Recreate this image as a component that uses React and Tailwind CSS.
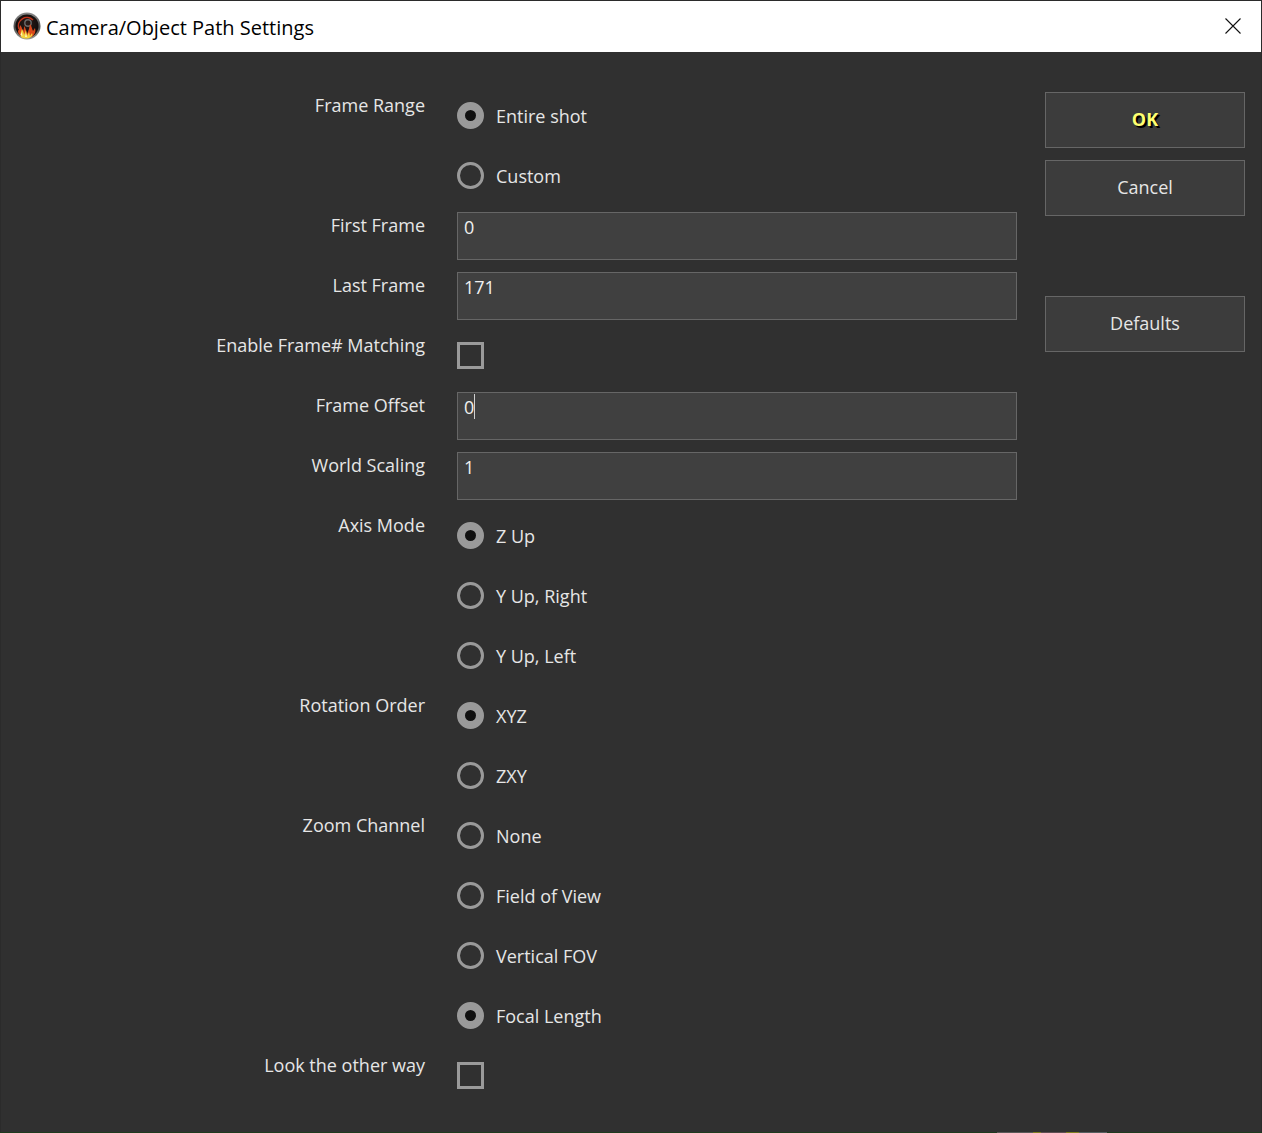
import React from 'react';

const Radio = ({ checked, label }) => (
  <div className="flex items-start h-[60px]">
    <div className={`w-[27px] h-[27px] mt-[16px] rounded-full border-[3px] border-[#9a9a9a] flex items-center justify-center shrink-0 ${checked ? 'bg-[#9a9a9a]' : ''}`}>
      {checked && <div className="w-[11px] h-[11px] rounded-full bg-[#111111]"></div>}
    </div>
    <span className="ml-3 mt-[17px] leading-[27px] text-[#e6e6e6]">{label}</span>
  </div>
);

const Check = () => (
  <div className="h-[60px] pt-[16px]">
    <div className="w-[27px] h-[27px] border-[3px] border-[#9a9a9a]"></div>
  </div>
);

const Field = ({ value, caret }) => (
  <div className="h-[60px] pt-[6px]">
    <div className="h-[48px] border border-[#666666] bg-[#404040] pl-[6px] pt-[1px] flex items-start text-[#f0f0f0]">
      <span className="leading-[27px]">{value}</span>
      {caret && <span className="w-px h-[25px] bg-[#d0d0d0]"></span>}
    </div>
  </div>
);

const Row = ({ label, children }) => (
  <div className="flex">
    <div className="w-[424px] text-right pt-[6px] leading-[27px] text-[#e6e6e6] h-[60px]">{label}</div>
    <div className="ml-[32px] flex-1">{children}</div>
  </div>
);

const Btn = ({ children, className }) => (
  <div className={`h-[56px] border border-[#666666] bg-[#3c3c3c] pb-[2px] flex items-center justify-center ${className}`}>
    {children}
  </div>
);

const Logo = () => (
  <svg width="28" height="28" viewBox="0 0 28 28" className="shrink-0 mb-[1px]">
    <defs>
      <linearGradient id="rim" x1="0" y1="0" x2="0" y2="1">
        <stop offset="0%" stopColor="#8a8a8a" />
        <stop offset="55%" stopColor="#4a4a4a" />
        <stop offset="100%" stopColor="#9a9a90" />
      </linearGradient>
      <radialGradient id="core" cx="50%" cy="40%" r="60%">
        <stop offset="0%" stopColor="#2c1c18" />
        <stop offset="100%" stopColor="#0c0a0a" />
      </radialGradient>
    </defs>
    <circle cx="14" cy="14" r="13.5" fill="url(#rim)" />
    <circle cx="14" cy="14" r="11.5" fill="url(#core)" />
    <path d="M6 17a8.5 8.5 0 0 1 14-9" fill="none" stroke="#c0341c" strokeWidth="1.6" />
    <circle cx="15" cy="11" r="3.2" fill="none" stroke="#6a6a6a" strokeWidth="1.4" />
    <path d="M5 19c1-2 2-3 2-6 2 2 2 4 3 6 1-2 1-3 1-5 2 2 2 5 3 8l2-5 1-5c2 3 2 5 3 7 1-1 1-2 2-3 1 3 0 6-2 8-3 2-9 2-12 0-2-1-3-3-3-5z" fill="#d9481a" />
    <path d="M8 25c-1-3 0-5 1-8 1 2 2 4 2 6l2-5 1 6 2-4 1 4 2-3c1 2 0 3-1 4-3 2-7 2-10 0z" fill="#f3d23c" />
    <path d="M12 25l1-4 1 4zM7.5 23l1-3 1 4z" fill="#fff6c0" />
  </svg>
);

export default function App() {
  return (
    <div className="w-[1262px] h-[1133px] bg-[#1e3a1e] overflow-hidden" style={{ fontFamily: '"Open Sans", "Noto Sans", sans-serif' }}>
      <div className="h-[1132px] bg-[#303030] border-t border-l border-r border-[#2b2b2b] text-[18px] flex flex-col">
        <div className="h-[51px] bg-white flex items-center pl-[12px] pr-[20px] text-black text-[20px]">
          <Logo />
          <span className="ml-[5px] mt-[2px] flex-1">Camera/Object Path Settings</span>
          <svg width="16" height="16" viewBox="0 0 16 16" fill="none" stroke="#111111" strokeWidth="1.1" className="mb-[1px]">
            <path d="M0.5 0.5l15 15M15.5 0.5l-15 15" />
          </svg>
        </div>
        <div className="flex pt-[34px]">
          <div className="w-[1016px]">
            <Row label="Frame Range"><Radio checked label="Entire shot" /></Row>
            <Row><Radio label="Custom" /></Row>
            <Row label="First Frame"><Field value="0" /></Row>
            <Row label="Last Frame"><Field value="171" /></Row>
            <Row label="Enable Frame# Matching"><Check /></Row>
            <Row label="Frame Offset"><Field value="0" caret /></Row>
            <Row label="World Scaling"><Field value="1" /></Row>
            <Row label="Axis Mode"><Radio checked label="Z Up" /></Row>
            <Row><Radio label="Y Up, Right" /></Row>
            <Row><Radio label="Y Up, Left" /></Row>
            <Row label="Rotation Order"><Radio checked label="XYZ" /></Row>
            <Row><Radio label="ZXY" /></Row>
            <Row label="Zoom Channel"><Radio label="None" /></Row>
            <Row><Radio label="Field of View" /></Row>
            <Row><Radio label="Vertical FOV" /></Row>
            <Row><Radio checked label="Focal Length" /></Row>
            <Row label="Look the other way"><Check /></Row>
          </div>
          <div className="ml-[28px] w-[200px] pt-[6px] flex flex-col text-[#e6e6e6]">
            <Btn className="font-bold text-[#ffff70] [text-shadow:2px_2px_0_#000]">OK</Btn>
            <Btn className="mt-[12px]">Cancel</Btn>
            <Btn className="mt-[80px]">Defaults</Btn>
          </div>
        </div>
      </div>
      <div className="flex h-px ml-[997px] w-[110px]">
        <div className="w-[36px] bg-[#5a5a58]"></div>
        <div className="w-[8px] bg-[#7f7f20]"></div>
        <div className="w-[25px] bg-[#5f4f52]"></div>
        <div className="w-[13px] bg-[#7f7f20]"></div>
        <div className="flex-1 bg-[#566060]"></div>
      </div>
    </div>
  );
}
